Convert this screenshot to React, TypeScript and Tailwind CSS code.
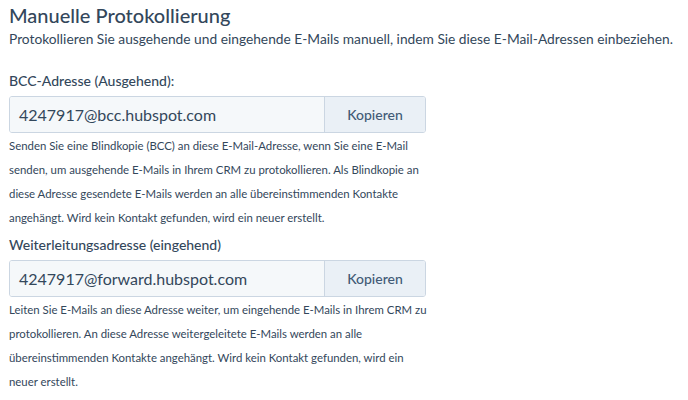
export default function App() {
  const font = { fontFamily: "Lato, 'Noto Sans', sans-serif" };
  return (
    <div className="w-[688px] h-[400px] bg-white text-[#33475b] px-[9px] overflow-hidden" style={font}>
      {/* Header */}
      <h1 className="text-[20px] leading-[28px] font-medium pt-[1px]">Manuelle Protokollierung</h1>
      <p className="text-[13.75px] leading-[20px] text-[#33475b] whitespace-nowrap">
        Protokollieren Sie ausgehende und eingehende E-Mails manuell, indem Sie diese E-Mail-Adressen einbeziehen.
      </p>

      {/* BCC */}
      <Field
        label="BCC-Adresse (Ausgehend):"
        value="4247917@bcc.hubspot.com"
        text="Senden Sie eine Blindkopie (BCC) an diese E-Mail-Adresse, wenn Sie eine E-Mail senden, um ausgehende E-Mails in Ihrem CRM zu protokollieren. Als Blindkopie an diese Adresse gesendete E-Mails werden an alle übereinstimmenden Kontakte angehängt. Wird kein Kontakt gefunden, wird ein neuer erstellt."
        className="mt-[22px]"
      />

      {/* Forward */}
      <Field
        label="Weiterleitungsadresse (eingehend)"
        value="4247917@forward.hubspot.com"
        text="Leiten Sie E-Mails an diese Adresse weiter, um eingehende E-Mails in Ihrem CRM zu protokollieren. An diese Adresse weitergeleitete E-Mails werden an alle übereinstimmenden Kontakte angehängt. Wird kein Kontakt gefunden, wird ein neuer erstellt."
        className="mt-[5px]"
      />
    </div>
  );
}

function Field({
  label,
  value,
  text,
  className,
}: {
  label: string;
  value: string;
  text: string;
  className?: string;
}) {
  return (
    <div className={className}>
      <div className="text-[14px] leading-[20px] font-medium">{label}</div>
      <div className="mt-[5px] flex w-[417px] h-[37px] border border-[#cbd6e2] rounded-[3px] overflow-hidden">
        <div className="flex-1 bg-[#f5f8fa] flex items-center pl-[9px] text-[16px] text-[#33475b]">{value}</div>
        <button className="w-[101px] bg-[#eaf0f6] border-l border-[#cbd6e2] text-[14px] font-medium text-[#425b76]">
          Kopieren
        </button>
      </div>
      <p className="mt-[1px] w-[425px] text-[11.4px] leading-[24px] text-[#33475b]">{text}</p>
    </div>
  );
}
